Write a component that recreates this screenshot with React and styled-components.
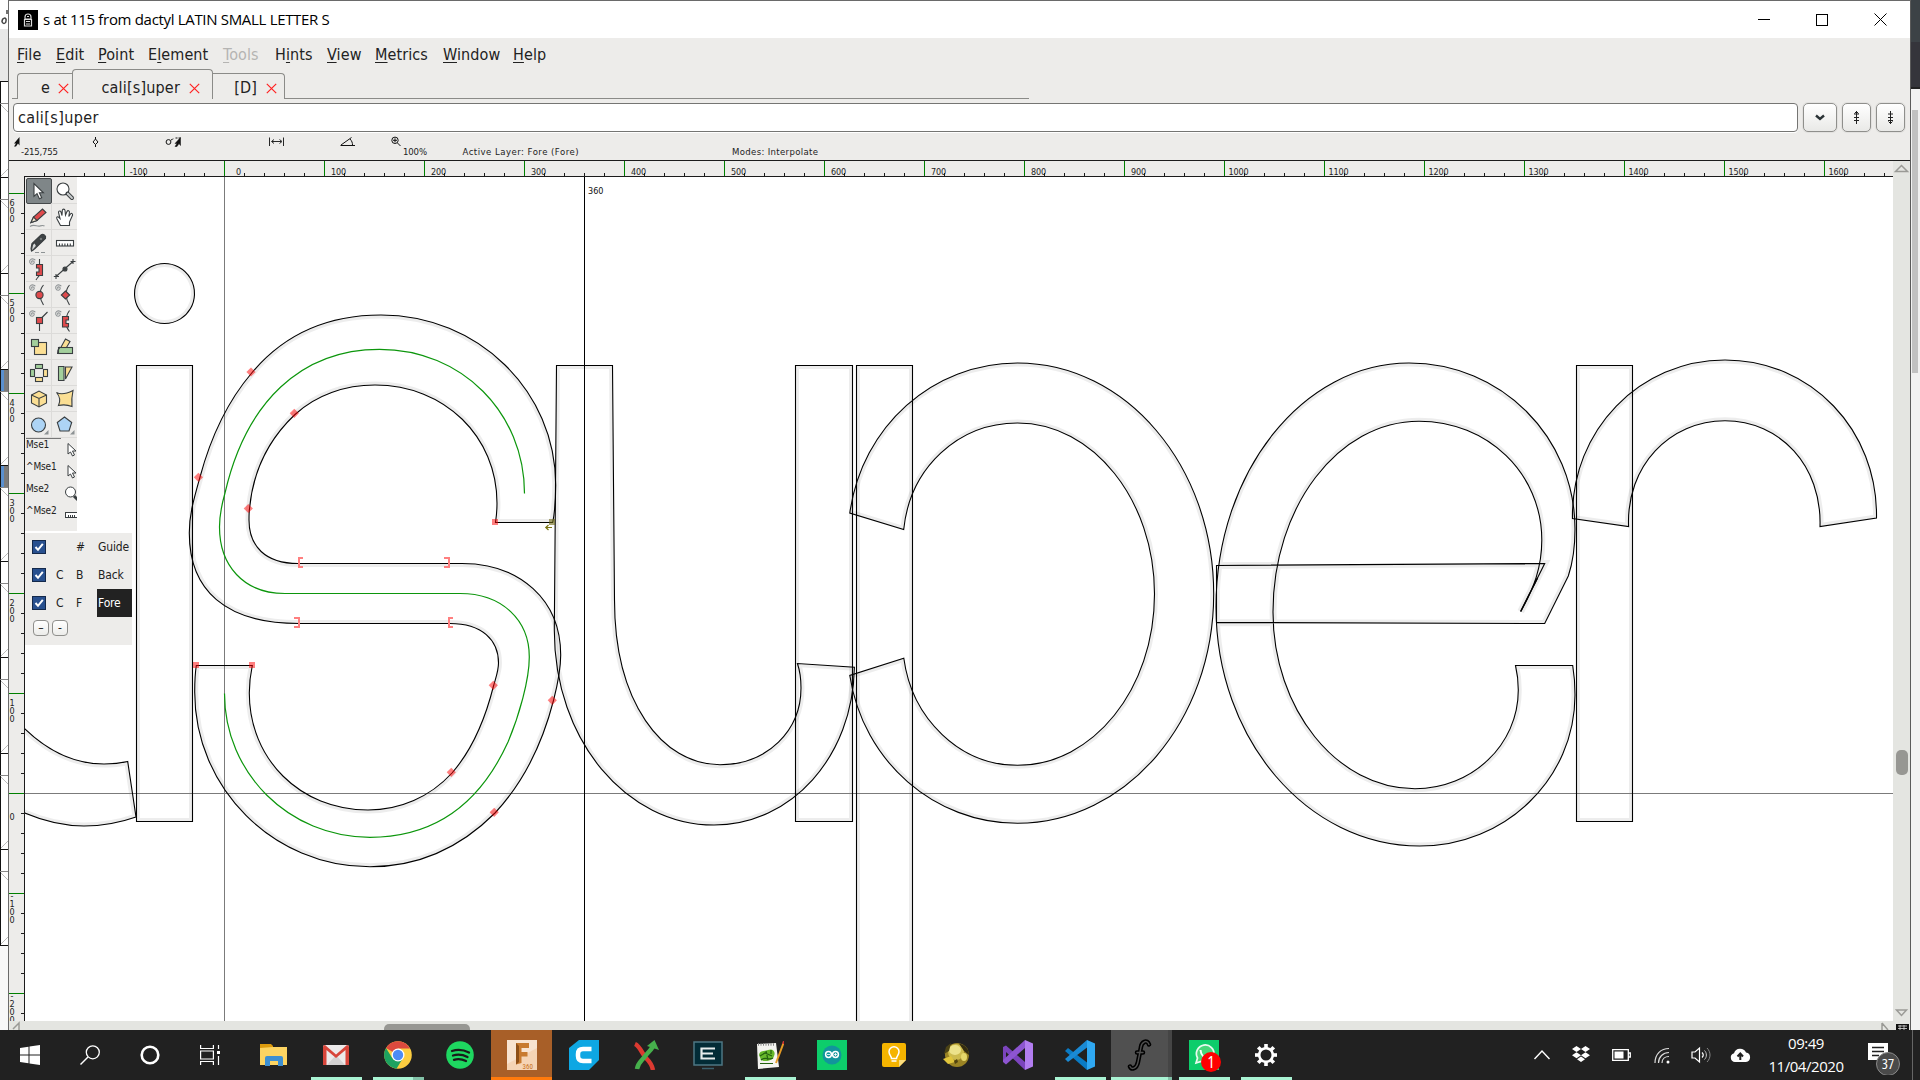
import React from "react";
import styled, { createGlobalStyle } from "styled-components";

const UI = '"DejaVu Sans Condensed", "DejaVu Sans", sans-serif';
const SEGOE = '"Open Sans", "Noto Sans", sans-serif';

const Global = createGlobalStyle`
  body { margin: 0; background: #212121; overflow: hidden; }
  * { box-sizing: border-box; }
  svg { display: block; }
`;

const Desktop = styled.div`
  width: 1920px;
  height: 1080px;
  display: flex;
  flex-direction: column;
  overflow: hidden;
  font-family: ${UI};
  font-stretch: condensed;
  color: #222;
`;
const Workspace = styled.div`
  display: flex;
  height: 1030px;
  background: #f8f8f8;
`;
const Win = styled.main`
  width: 1903px;
  height: 1030px;
  display: flex;
  flex-direction: column;
  border-top: 1px solid #6a6a6a;
  border-left: 1px solid #6a6a6a;
  border-right: 1px solid #5a5a5a;
  background: #edecea;
`;
const TitleBar = styled.header`
  height: 37px;
  display: flex;
  align-items: center;
  background: #fff;
  padding-left: 9px;
`;
const TitleText = styled.h1`
  flex: 1;
  margin: 0 0 1px 5px;
  font: 400 15px ${SEGOE};
  letter-spacing: -0.32px;
  color: #000;
  white-space: pre;
`;
const WinButton = styled.div`
  width: 58.5px;
  display: flex;
  justify-content: center;
`;
const MenuBar = styled.nav`
  height: 31px;
  display: flex;
  align-items: center;
  padding: 2px 0 0 8px;
`;
const MenuItem = styled.span`
  width: ${(p) => p.$w}px;
  font-size: 16px;
  line-height: 18px;
  letter-spacing: 0.1px;
  white-space: pre;
  color: ${(p) => (p.$off ? "#b5b4b2" : "#222")};
  u { text-underline-offset: 2px; text-decoration-thickness: 1px; }
`;
const Tabs = styled.div`
  height: 31px;
  display: flex;
  align-items: flex-end;
  padding-bottom: 1px;
  padding-left: 3px;
`;
const TabEdge = styled.div`
  width: ${(p) => p.$w}px;
  height: 1px;
  background: #8b8b88;
`;
const Tab = styled.div`
  width: ${(p) => p.$w}px;
  height: ${(p) => (p.$active ? 30 : 26)}px;
  display: flex;
  align-items: flex-end;
  justify-content: flex-end;
  gap: ${(p) => p.$gap}px;
  padding: 0 ${(p) => p.$pad}px 2px 0;
  border: 1px solid #8b8b88;
  border-bottom: none;
  border-left-width: ${(p) => (p.$joined ? 0 : 1)}px;
  border-right-width: ${(p) => (p.$open ? 0 : 1)}px;
  border-radius: ${(p) => (p.$joined ? 0 : 4)}px ${(p) => (p.$open ? 0 : 4)}px 0 0;
  font-size: 16px;
  line-height: 18px;
  letter-spacing: 0.18px;
  svg { margin-bottom: 3px; }
`;
const EntryRow = styled.div`
  height: 33px;
  display: flex;
  align-items: flex-start;
  padding: 3px 0 0 4px;
`;
const Entry = styled.div`
  width: 1788px;
  height: 29px;
  margin-right: 5px;
  padding-left: 4px;
  border: 1px solid #757573;
  border-radius: 4px;
  background: #fff;
  font-size: 16px;
  line-height: 27px;
  letter-spacing: 0.38px;
  box-shadow: 0 1px 0 #fff;
`;
const PushButton = styled.div`
  width: ${(p) => p.$w}px;
  height: 29px;
  margin-right: 5px;
  display: flex;
  align-items: center;
  justify-content: center;
  border: 1px solid #8f8f8c;
  border-radius: 5px;
  background: linear-gradient(#fff, #e9e9e7);
  box-shadow: 0 0 0 1px #e2e1df;
`;
const InfoBar = styled.div`
  height: 28px;
  border-bottom: 1px solid #1c1c1c;
`;
const RulerRow = styled.div`
  display: flex;
  height: 16px;
`;
const Body = styled.div`
  display: flex;
  height: 844px;
`;
const Canvas = styled.section`
  position: relative;
  width: 1868px;
  height: 844px;
  background: #fff;
  overflow: hidden;
`;
const VScroll = styled.div`
  width: 17px;
  height: ${(p) => p.$h}px;
  background: #e4e5e1;
`;
const HScroll = styled.div`
  height: 9px;
  background: #e4e5e1;
  overflow: hidden;
`;
const Palette = styled.aside`
  position: absolute;
  left: 0;
  top: 0;
  width: 52px;
  height: 354px;
  padding: 1px 0 0 1px;
  background: #edecea;
  overflow: hidden;
`;
const ToolGrid = styled.div`
  display: grid;
  grid-template-columns: 26px 26px;
  grid-auto-rows: 26px;
`;
const Tool = styled.div`
  border-right: 1px solid #dcdbd9;
  border-bottom: 1px solid #dcdbd9;
  ${(p) => p.$on && "background: #7f8688; border: 1px solid #45494b; border-radius: 2px; svg { margin: -1px; }"}
`;
const MouseList = styled.div`
  border-top: 1px solid #777;
  width: 35px;
`;
const MouseRow = styled.div`
  display: flex;
  width: 52px;
  height: 22px;
  font-size: 10px;
  line-height: 12px;
  letter-spacing: -0.15px;
  span { width: 36px; white-space: pre; padding-left: 0; }
`;
const Layers = styled.aside`
  position: absolute;
  left: 0;
  top: 356px;
  width: 107px;
  height: 112px;
  background: #edecea;
`;
const LayerRow = styled.div`
  display: grid;
  grid-template-columns: 31px 20px 21px 35px;
  height: 28px;
  align-items: center;
  font-size: 12px;
  letter-spacing: -0.15px;
`;
const Check = styled.div`
  width: 14px;
  height: 14px;
  margin-left: 7px;
  background: #28508f;
  border: 1px solid #14294b;
`;
const LayerName = styled.div`
  height: 28px;
  line-height: 29px;
  padding-left: 1px;
  background: ${(p) => (p.$on ? "#222" : "transparent")};
  color: ${(p) => (p.$on ? "#fff" : "#222")};
`;
const LayerButtons = styled.div`
  display: flex;
  gap: 3px;
  padding: 3px 0 0 8px;
`;
const MiniButton = styled.div`
  width: 16px;
  height: 16px;
  border: 1px solid #8f8f8c;
  border-radius: 4px;
  background: linear-gradient(#fff, #ececea);
  font-size: 12px;
  line-height: 14px;
  text-align: center;
`;
const Taskbar = styled.footer`
  height: 50px;
  display: flex;
  background: #212121;
`;
const Slot = styled.div`
  width: ${(p) => p.$w || 62}px;
  margin-left: ${(p) => p.$ml || 0}px;
  height: 50px;
  display: flex;
  align-items: center;
  justify-content: center;
  position: relative;
  background: ${(p) => p.$bg || "transparent"};
`;
const Running = styled.i`
  position: absolute;
  bottom: 0;
  left: ${(p) => (p.$full ? 0 : 6)}px;
  right: ${(p) => (p.$full ? 0 : 5)}px;
  height: 3px;
  background: ${(p) => p.$c || "#a9f3d3"};
`;
const StackEdge = styled.i`
  position: absolute;
  right: ${(p) => p.$r}px;
  bottom: 0;
  width: ${(p) => p.$w}px;
  height: ${(p) => p.$h}px;
  background: ${(p) => p.$c};
`;
const Tray = styled.div`
  margin-left: auto;
  display: flex;
  align-items: center;
  width: 394px;
`;
const TrayIcon = styled.div`
  margin-left: ${(p) => p.$ml}px;
`;
const Clock = styled.div`
  width: 96px;
  margin-left: 7px;
  text-align: center;
  color: #fff;
  font: 400 15px/23px ${SEGOE};
  letter-spacing: -0.45px;
`;

const Ic = ({ w, h, vb, children, ...r }) => (
  <svg width={w} height={h} viewBox={vb || `0 0 ${w} ${h}`} fill="none" {...r}>
    {children}
  </svg>
);

/* ---------- glyph outlines, in window pixels ---------- */
const GLYPHS = [
  "M20 724C48 753 77 764 104 764C112 764 120 763.3 127.7 761.5L136 817C119 823 102 826 84 826C62 826 42 821 20 811Z",
  "M136.5 365.5H192.5V821.5H136.5Z",
  "M164.5 263.500a30 30 0 1 0 .01 0Z",
  "M552.7 522.5H495.5C496.5 516 497 510 497 503C497 437 445 385 375 385C345 385 316 395 295 414.5C268 440 253 472 249.6 508C249 512 249 516 249 520C249 546 265 563.5 298 563.5H462C520 563.5 560.7 600 560.7 655C560.7 670 558 683 553.5 700.5C542 745 523 783 495 813C460 848 418 866.7 370 866.7C273 866.7 194.7 788 194.7 692C194.7 682 195 674 196.3 665.5H252.3C250.5 674 249.3 684 249.3 693C249.3 759 300 810 368 810C400 810 430 797 452 773C472 750 485 720 493.5 686C496 677 498.5 671 498.5 663C498.5 640 482 623.5 450 623.5H299C225 623.5 189.3 590 189.3 533C189.3 515 193 502 200 477C210 440 227 402 251.7 373C285 333 330 315 381 315C478 315 555.7 391 555.7 485C555.7 497 555 511 552.7 522.5Z",
  "M556.5 365.5H612.5L614.5 600C614.5 702 662 764.7 720 764.7C768 764.7 801 730 801 688C801 679 800 671 797.4 663.5L854.4 667.3C853 757 791 825 714 825C627 825 554.3 741 554.3 630Z",
  "M795.5 365.5H852.5V821.5H795.5Z",
  "M856.5 365.5H912.5V1100H856.5Z",
  "M849.8 513C862 426 933 363 1017.5 363C1126 363 1213.7 466 1213.7 594C1213.7 721 1126 823.3 1017.5 823.3C935 823.3 863 762 849.8 675.5L903.8 658.3C912 719 960 765.3 1017.5 765.3C1093 765.3 1154.5 689 1154.5 594C1154.5 500 1093 423 1017.5 423C958 423 910 468 903.7 529.5Z",
  "M1572.7 665.5H1515.5C1517.5 674 1518.3 682 1518.3 690C1518.3 745 1472 788.7 1415 788.7C1337 788.7 1273 709 1273 612C1273 507 1338 421.2 1419 421.2C1487 421.2 1541.8 473 1541.8 540C1541.8 567 1534 588 1520.7 611.5L1544.7 563.5L1216.5 565.5V622.5L1544.7 623.5L1568.3 576C1573 562 1575 546 1575 529C1575 437 1501 363 1409 363C1303 363 1216 472 1216 607C1216 739 1307 846 1419.7 846C1505 846 1575 779 1575 695C1575 684 1574.3 675 1572.7 665.5Z",
  "M1576.5 365.5H1632.5V821.5H1576.5Z",
  "M1572.5 518.5C1571 430 1640 360 1725 360C1811 360 1878 430 1876.5 518L1820 526.5C1822 466 1780 420.7 1725 420.7C1670 420.7 1626 466 1628.6 526.5Z",
];
const SPINE =
  "M524.5 493.5C524.5 413 462 349.3 379.500 349.3C301 349.3 246 402 225 493C221 507 219.5 515 219.5 527C219.5 565 243 593.5 285 593.5H460C502 593.5 529.3 620 529.3 657C529.3 680 519 716 508 742C478 808 430 837.3 370 837.3C289 837.3 224.5 773 224.5 693.5";

const DIAMONDS = [[251, 372], [294.3, 413.3], [198.4, 477.3], [248.3, 508.5], [493.3, 685.3], [552.3, 700.3], [451.3, 772.3], [494.2, 812.3]];
const SQUARES = [[495, 522], [196, 665], [252, 665]];

const GlyphView = () => (
  <svg width="1868" height="844" viewBox="25 177 1868 844" fill="none">
    <defs>
      {GLYPHS.map((d, i) => (
        <clipPath id={`g${i}`} key={i}><path d={d} /></clipPath>
      ))}
    </defs>
    {GLYPHS.map((d, i) => (
      <path key={i} d={d} stroke="#000" strokeOpacity="0.07" strokeWidth="7" clipPath={`url(#g${i})`} />
    ))}
    <path d="M25 793.5H1893M224.5 177V1021" stroke="#7b7b7b" />
    <path d="M584.5 177V1021" stroke="#000" />
    <path d={SPINE} stroke="#0c960c" strokeWidth="1.2" />
    {GLYPHS.map((d, i) => (
      <path key={i} d={d} stroke="#000" strokeWidth="1.1" />
    ))}
    <path d="M1537.5 578L1520.7 611.500" stroke="#000" strokeWidth="1.500" />
    {DIAMONDS.map(([x, y]) => (
      <path key={x} d={`M${x - 4.6} ${y}l4.6 -4.6l4.6 4.6l-4.6 4.6z`} fill="#ff0000" fillOpacity="0.5" />
    ))}
    {SQUARES.map(([x, y]) => (
      <rect key={x} x={x - 3} y={y - 3} width="6" height="6" fill="#ff0000" fillOpacity="0.5" />
    ))}
    <rect x="549" y="519" width="6" height="6" fill="#6b6611" fillOpacity="0.6" />
    <path d="M303 558H299V567H303M444 558H449V567H444M294 618H299V627H294M453 618H449V627H453" stroke="#ff7f7f" strokeWidth="2" />
    <path d="M552 527.5H546M548.5 525L545.8 527.5L548.5 530" stroke="#7a7411" strokeWidth="1.200" />
    <text x="588" y="194" fontSize="9" fill="#111">360</text>
  </svg>
);

const range = (a, b, s) => {
  const out = [];
  for (let v = a; v <= b; v += s) out.push(v);
  return out;
};

const TopRuler = () => (
  <svg width="1884" height="16" viewBox="9 161 1884 16">
    <path d="M24 176.5H1893" stroke="#1c1c1c" />
    {range(-180, 1660, 20).map((v) =>
      v % 100 === 0 ? (
        <g key={v}>
          <path d={`M${224.5 + v} 161V176`} stroke="#008000" />
          <text x={238.6 + v} y="174.5" fontSize="9" letterSpacing="-0.15" textAnchor="middle" fill="#222">{v}</text>
        </g>
      ) : (
        <path key={v} d={`M${224.5 + v} 173V176`} stroke="#1c1c1c" />
      )
    )}
  </svg>
);

const SideRuler = () => (
  <svg width="16" height="844" viewBox="9 177 16 844">
    <path d="M24.5 177V1021" stroke="#1c1c1c" />
    {range(-220, 600, 20).map((v) => {
      const y = 793.5 - v;
      if (v % 100 !== 0) return <path key={v} d={`M21 ${y}H24`} stroke="#1c1c1c" />;
      const chars = String(v).split("");
      return (
        <g key={v}>
          <path d={`M9 ${y}H24`} stroke="#008000" />
          {chars.map((c, i) => {
            const top = v < 0 ? 5.500 : v === 0 ? 26.500 : 12.500;
            return <text key={i} x="12" y={y + top + i * 7.9} fontSize="9" textAnchor="middle" fill="#222">{c}</text>;
          })}
        </g>
      );
    })}
  </svg>
);

const InfoStrip = () => (
  <svg width="1901" height="27" viewBox="9 133 1901 27" fill="none" stroke="#111" fontSize="9.5">
    <path d="M19.5 137L14 143.500L16 143.500L14 146.500L16 146.500L18 143.500L19.500 145.500Z" fill="#111" stroke="none" />
    <path d="M95.5 137V139M95.5 144.5V147M95.5 139L98 142L95.5 144.5L93 142Z" />
    <circle cx="168.5" cy="142" r="2.4" />
    <path d="M171 140L174 138.5M175.5 138H181" strokeDasharray="2 1" />
    <path d="M180.5 137.500L175 143.500L177 143.500L175 146.500L177 146.500L179 143.500L180.500 145.500Z" fill="#111" stroke="#111" strokeWidth=".5" />
    <path d="M269.5 137.5V146M283.5 137.5V146M272 141.5H281M274 139.5L271.5 141.5L274 143.5M279.5 139.5L282 141.5L279.5 143.5" strokeWidth="0.9" />
    <path d="M340.5 145.5H355M341 145L351.5 137.5M350 139C352 141 352.5 143 352.5 145" />
    <circle cx="395" cy="140.3" r="3.2" />
    <path d="M393 140.3H397M395 138.3V142.3M397.5 143L400.5 146" />
    <g fill="#222" stroke="none">
      <text x="21" y="155" textLength="37">-215,755</text>
      <text x="403" y="155" textLength="24">100%</text>
      <text x="462.5" y="155" textLength="116">Active Layer: Fore (Fore)</text>
      <text x="732" y="155" textLength="86">Modes: Interpolate</text>
    </g>
  </svg>
);

const RedX = () => (
  <Ic w={11} h={11}><path d="M.8.8L10.2 10.2M10.2.8L.8 10.2" stroke="#f22" strokeWidth="1.2" /></Ic>
);

const T = ({ children, on }) => (
  <Tool $on={on}>
    <Ic w={26} h={26} stroke="#3a3f41" strokeWidth="1.1">{children}</Ic>
  </Tool>
);
const Spiro = () => (
  <path d="M6.3 6.6C5.2 6.4 5.3 4.8 6.8 4.8C8.8 5 8.7 8 6.3 8.3C3.6 8.3 2.8 4.6 4.8 3.4C6.2 2.5 8.4 2.8 9.3 4.3" stroke="#8d9294" strokeWidth="1.1" />
);
const PTR = "M8 5.5V18.3L11 15.6L13.4 20.8L15.7 19.8L13.4 14.8H17.4Z";

const Tools = () => (
  <ToolGrid>
    <T on><path d={PTR} fill="#fff" /></T>
    <T><circle cx="11" cy="11" r="6" fill="#fff" /><path d="M15.5 15.500L20 20" stroke="#3a3f41" strokeWidth="4" strokeLinecap="round" /><path d="M15.8 15.8L20 20" stroke="#c9cccd" strokeWidth="2" strokeLinecap="round" /></T>
    <T><path d="M5 18.500L7.5 13L16.500 5L20 8.500L11 16.500Z" fill="#df4a4c" /><path d="M5 18.500L7.500 13L11 16.500Z" fill="#f3e6d0" /><path d="M4 22.5C8 19.5 11 23 14 22C16 21.4 17 21 18.500 22" stroke="#8d9294" /></T>
    <T><path d="M8.5 21.500L5 15C4 13 5.500 12 7 13.500L8 14.500L6.500 8.500C6.500 6.500 8.500 6.500 9 8L10 11.500L10.300 6.500C10.500 4.700 12.800 4.700 13 6.500L13.500 11L15 7.500C15.800 6 17.800 6.700 17.400 8.500L16.800 12.500L18.500 10C19.500 8.800 21 9.800 20.500 11.300L17.500 18V21.500Z" fill="#fff" /></T>
    <T><path d="M5 18.500L6 13.500L15 5C17 3.500 20.500 5.500 19.500 8.500L9 18.500L5.500 21Z" fill="#3f4446" /><path d="M5.500 20L6.500 14.500L9 12.500L10.500 16L6.500 20.500Z" fill="#d5d8d8" /><circle cx="15" cy="9" r="1.300" fill="#cfd2d2" /><path d="M9 22.500H20" strokeDasharray="4 2" stroke="#8d9294" /></T>
    <T><rect x="4.500" y="10.500" width="17" height="5.500" fill="#fff" /><path d="M7.500 16V13.500M10.200 16V13.500M12.900 16V13.500M15.600 16V13.500M18.300 16V13.500" /></T>
    <T><Spiro /><path d="M13.500 3V8M13.500 19C12.500 21 11 22 10 24" /><path d="M10.500 8.500H16.500V19.500H10.500V16H13V12H10.500Z" fill="#df4a4c" /></T>
    <T><path d="M4 21L21 6M4 18.500V23.500M1.800 21H7M18.500 6H23.500M21 3.500V8.500" transform="translate(0 -.5)" /><circle cx="13" cy="13" r="2" fill="#3a3f41" /></T>
    <T><Spiro /><path d="M17.500 3C13 8 13 16 17.500 23" /><circle cx="13.500" cy="13" r="3.600" fill="#df4a4c" /></T>
    <T><Spiro /><path d="M17.500 3C13 8 13 16 17.500 23" /><path d="M13.500 9L17.700 13L13.500 17L9.300 13Z" fill="#df4a4c" /></T>
    <T><Spiro /><path d="M13.500 12L21.500 4M13.500 15V23" /><rect x="10.500" y="9.500" width="6" height="6" fill="#df4a4c" /></T>
    <T><Spiro /><path d="M17.500 2.500C15.500 5 15 7 14.500 9M14.500 18C15 20 15.500 21 17.500 23.500" /><path d="M10.500 8.500H16.500V12H14V15.500H16.500V19H10.500Z" fill="#df4a4c" /></T>
    <T><rect x="8.500" y="8.500" width="12" height="12" fill="#fbdf94" /><rect x="5.500" y="5.500" width="7" height="7" fill="#a3cf9c" /></T>
    <T><path d="M8 15L13.500 5L18 7.500L13 16Z" fill="#fbdf94" /><rect x="6.500" y="13.500" width="14" height="6" fill="#a3cf9c" /><path d="M8 13C6 15 5.500 17.500 5.500 20" /></T>
    <T><rect x="9.500" y="4.500" width="7" height="4" fill="#a3cf9c" /><rect x="4.500" y="9.500" width="4" height="7" fill="#a3cf9c" /><rect x="17.500" y="9.500" width="4" height="7" fill="#fbdf94" /><rect x="9.500" y="17.500" width="7" height="4" fill="#fbdf94" /></T>
    <T><path d="M6.500 6.500H12V20.500H6.500Z" fill="#a3cf9c" /><path d="M13.500 19V7H20Z" fill="#fbdf94" /></T>
    <T><path d="M5.500 9L13 5L20.500 9V17L13 21L5.500 17Z" fill="#fbdf94" /><path d="M5.500 9L13 12.500L20.500 9M13 12.500V21" /></T>
    <T><path d="M4.500 6.500C9 9 15 7.500 21 4.500C20 9 19.500 15 20 20.500C15 18.500 11 18.500 6.500 19.500C8.500 15 8 10.500 4.500 6.500Z" fill="#fbdf94" /></T>
    <T><circle cx="12.500" cy="13" r="7" fill="#add4f5" /><path d="M22.500 18V22.500H18Z" fill="#8d9294" stroke="none" /></T>
    <T><path d="M12.500 5L19.700 10.500L17 19H8L5.300 10.500Z" fill="#add4f5" /><path d="M22.500 18V22.500H18Z" fill="#8d9294" stroke="none" /></T>
  </ToolGrid>
);

const MicroPointer = () => (
  <Ic w={16} h={20}><path d="M6 4.500V15L8.500 13L10.500 17L12.500 16L10.500 12H14Z" fill="#fff" stroke="#3a3f41" /></Ic>
);

const LeftBackdrop = () => (
  <svg width="8" height="1030" viewBox="0 0 8 1030" fill="none">
    <path d="M0 0H8V29H0Z" fill="#fff" />
    <path d="M0 29H8V81H0Z" fill="#e8e8e8" />
    <path d="M0 81H8V945H0Z" fill="#fff" />
    <path d="M2 22C2 17 7 17 6 21C6 24 3 24 2 22M7 10V14" stroke="#444" strokeWidth="1.500" />
    <path d="M.5 81V945" stroke="#111" />
    {range(81, 945, 96).map((y) => (
      <g key={y}>
        <path d={`M0 ${y + 0.5}H8`} stroke="#111" />
        {y < 900 && <path d={`M0 ${y + 22.500}H8`} stroke="#888" />}
        {y < 900 && <path d={`M1 ${y + 24}L8 ${y + 31}M1 ${y + 95}L8 ${y + 88}`} stroke="#bbb" />}
      </g>
    ))}
    <path d="M1 370H4V391H1ZM1 466H4V487H1Z" fill="#5a90cf" />
    <path d="M4 370H8V391H4ZM4 466H8V487H4Z" fill="#7b7b7b" />
  </svg>
);

const RightBackdrop = () => (
  <svg width="9" height="1030" viewBox="0 0 9 1030">
    <path d="M0 0H9V42H0Z" fill="#3c4246" />
    <path d="M0 42H9V87H0Z" fill="#35353b" />
    <path d="M0 87H9V89H0Z" fill="#222" />
    <path d="M0 89H9V1030H0Z" fill="#f1f1f1" />
    <path d="M1 110H7V373H1Z" fill="#c1c1c1" />
  </svg>
);

const GEAR = Array.from({ length: 8 }, (_, i) => i * 45);

export default function App() {
  return (
    <Desktop>
      <Global />
      <Workspace>
        <LeftBackdrop />
        <Win>
          <TitleBar>
            <Ic w={20} h={20}>
              <rect width="20" height="20" fill="#000" />
              <path d="M7 7C7 3 13 3 13 7V9H7ZM6.500 9.500H13.500V16H6.500Z" stroke="#ddd" strokeWidth="1.200" />
              <path d="M8 11.500H12M8 14H12M9 6.500H11" stroke="#ddd" />
            </Ic>
            <TitleText>s at 115 from dactyl LATIN SMALL LETTER S</TitleText>
            <WinButton><Ic w={12} h={12}><path d="M0 5.500H12" stroke="#000" /></Ic></WinButton>
            <WinButton><Ic w={12} h={12}><rect x=".5" y=".5" width="11" height="11" stroke="#000" /></Ic></WinButton>
            <WinButton><Ic w={13} h={13}><path d="M.5.5L12.500 12.500M12.500.5L.5 12.500" stroke="#000" /></Ic></WinButton>
          </TitleBar>
          <MenuBar>
            <MenuItem $w={39}><u>F</u>ile</MenuItem>
            <MenuItem $w={42}><u>E</u>dit</MenuItem>
            <MenuItem $w={50}><u>P</u>oint</MenuItem>
            <MenuItem $w={75}>E<u>l</u>ement</MenuItem>
            <MenuItem $w={52} $off><u>T</u>ools</MenuItem>
            <MenuItem $w={52}>H<u>i</u>nts</MenuItem>
            <MenuItem $w={48}><u>V</u>iew</MenuItem>
            <MenuItem $w={68}><u>M</u>etrics</MenuItem>
            <MenuItem $w={70}><u>W</u>indow</MenuItem>
            <MenuItem $w={50}><u>H</u>elp</MenuItem>
          </MenuBar>
          <Tabs>
            <TabEdge $w={5} />
            <Tab $w={55} $gap={8} $pad={3} $open>e<RedX /></Tab>
            <Tab $w={141} $gap={9} $pad={12} $active>cali[s]uper<RedX /></Tab>
            <Tab $w={72} $gap={9} $pad={7} $joined>[D]<RedX /></Tab>
            <TabEdge $w={744} />
          </Tabs>
          <EntryRow>
            <Entry>cali[s]uper</Entry>
            <PushButton $w={34}><Ic w={10} h={7}><path d="M1 1.500L5 5L9 1.500" stroke="#2b3336" strokeWidth="2.400" /></Ic></PushButton>
            <PushButton $w={29}><Ic w={7} h={13}><path d="M3.500 0V13M1 3H6M1 6.500H6M1 9.500H6M1.500 2.500L3.500.5L5.500 2.500" stroke="#222" /></Ic></PushButton>
            <PushButton $w={29}><Ic w={7} h={13}><path d="M3.500 0V13M1 3H6M1 6.500H6M1 9.500H6M1.500 10.500L3.500 12.500L5.500 10.500" stroke="#222" /></Ic></PushButton>
          </EntryRow>
          <InfoBar><InfoStrip /></InfoBar>
          <RulerRow>
            <TopRuler />
            <VScroll $h={16}>
              <Ic w={17} h={16}><path d="M2.500 10.500L8.500 4.500L14.500 10.500Z" fill="#e4e5e1" stroke="#9a9a96" strokeWidth="1.500" /></Ic>
            </VScroll>
          </RulerRow>
          <Body>
            <SideRuler />
            <Canvas>
              <GlyphView />
              <Palette>
                <Tools />
                <MouseList>
                  <MouseRow><span>Mse1</span><MicroPointer /></MouseRow>
                  <MouseRow><span>^Mse1</span><MicroPointer /></MouseRow>
                  <MouseRow><span>Mse2</span><Ic w={16} h={20}><circle cx="8.500" cy="9" r="5" fill="#fff" stroke="#3a3f41" /><path d="M12 13L16 17" stroke="#3a3f41" strokeWidth="3" /></Ic></MouseRow>
                  <MouseRow><span>^Mse2</span><Ic w={16} h={20}><rect x="3.500" y="7.500" width="17" height="5" fill="#fff" stroke="#3a3f41" /><path d="M6.500 12V10M8.500 12V10M10.500 12V10M12.500 12V10" stroke="#3a3f41" /></Ic></MouseRow>
                </MouseList>
              </Palette>
              <Layers>
                {[["", "#", "Guide"], ["C", "B", "Back"], ["C", "F", "Fore"]].map(([c, k, n]) => (
                  <LayerRow key={n}>
                    <Check><Ic w={12} h={12}><path d="M2.500 6L5 8.800L9.800 2.800" stroke="#fff" strokeWidth="2" /></Ic></Check>
                    <span>{c}</span>
                    <span>{k}</span>
                    <LayerName $on={n === "Fore"}>{n}</LayerName>
                  </LayerRow>
                ))}
                <LayerButtons><MiniButton>–</MiniButton><MiniButton>-</MiniButton></LayerButtons>
              </Layers>
            </Canvas>
            <VScroll $h={844}>
              <Ic w={17} h={844}>
                <rect x="3" y="573" width="12" height="25" rx="5" fill="#979793" />
                <path d="M3.500 833L8.500 838.500L13.500 833Z" stroke="#9a9a96" strokeWidth="1.500" />
              </Ic>
            </VScroll>
          </Body>
          <HScroll>
            <Ic w={1901} h={9}>
              <rect x="375" y="3" width="86" height="14" rx="5" fill="#979793" />
              <path d="M4 8L10 2V12M1873 2L1879 9M1873 2V10" stroke="#9a9a96" strokeWidth="1.500" />
              <rect x="1887" y="3" width="13" height="6" fill="#111" />
              <path d="M1889 5H1898M1889 7.500H1898M1891 4V9M1895 4V9" stroke="#ddd" strokeWidth=".8" />
            </Ic>
          </HScroll>
        </Win>
        <RightBackdrop />
      </Workspace>

      <Taskbar>
        <Slot $w={60}><Ic w={20} h={20}><path d="M0 3L8.500 1.700V9.500H0ZM9.500 1.500L20 0V9.500H9.500ZM0 10.500H8.500V18.300L0 17ZM9.500 10.500H20V20L9.500 18.500Z" fill="#fff" /></Ic></Slot>
        <Slot $w={60}><Ic w={20} h={20}><circle cx="12.800" cy="7.300" r="6.500" stroke="#fff" strokeWidth="1.300" /><path d="M8 12L.5 19.500" stroke="#fff" strokeWidth="1.400" /></Ic></Slot>
        <Slot $w={60}><Ic w={20} h={20}><circle cx="10" cy="10" r="8.300" stroke="#fff" strokeWidth="2.600" /></Ic></Slot>
        <Slot $w={60}><Ic w={20} h={20}><path d="M.6 0V3.500H13.400V0M.6 20V16.500H13.400V20M.6 6H13.400V14H.6ZM18.500 0V4M18.500 11V20" stroke="#fff" strokeWidth="1.200" /><rect x="17" y="6" width="3" height="3" fill="#fff" /></Ic></Slot>
        <Slot $ml={3}><Ic w={28} h={24}><path d="M0 1H11L13 3V6H0Z" fill="#dc9a0d" /><path d="M0 5L13 4H27V22H0Z" fill="#fcd462" /><path d="M5 23V15Q5 13 7 13H21Q23 13 23 15V23H18V18H10V23Z" fill="#3d8fd1" /></Ic></Slot>
        <Slot><Ic w={26} h={20}><rect width="26" height="20" rx="2" fill="#eceaea" /><path d="M4 20L13 10L22 20Z" fill="#d4d2d2" /><path d="M0 20V2Q0 0 2 0L13 9.500L24 0Q26 0 26 2V20H22.500V5L13 13L3.500 5V20Z" fill="#d8453a" /></Ic><Running /></Slot>
        <Slot>
          <Ic w={28} h={28}><circle cx="14" cy="14" r="13.800" fill="#fccd40" /><path d="M14 14L2 7A13.800 13.800 0 0 1 26 7.500H14Z" fill="#dc4a3e" /><path d="M2 7A13.800 13.800 0 0 0 12.500 27.700L19 17L14 14L8.500 17.500Z" fill="#1da260" /><circle cx="14" cy="14" r="6.500" fill="#fff" /><circle cx="14" cy="14" r="5.200" fill="#4c8bf5" /></Ic>
          <Running /><StackEdge $r={5} $w={11} $h={3} $c="#82c2a8" />
        </Slot>
        <Slot><Ic w={28} h={28}><circle cx="14" cy="14" r="13.800" fill="#1ed760" /><path d="M6 10C12 8 18 9 23 11.500M7 14.500C12 13 17 13.700 21.500 16M8 18.800C12 17.500 16 18 20 20" stroke="#1a1a1a" strokeWidth="2.300" strokeLinecap="round" /></Ic></Slot>
        <Slot $w={61} $bg="#a85f28">
          <Ic w={30} h={30}><rect width="30" height="30" fill="#f8e3d0" /><path d="M0 24L30 8V30H0Z" fill="#f3c9a4" opacity=".6" /><path d="M9 3H22V8H14.500V12H20.500V16.500H14.500V23L9 24.500Z" fill="#c87a2f" /><path d="M9 3L12 6V22L9 24.500Z" fill="#8e4f17" /><text x="15.500" y="28.500" fontSize="7" fill="#c9701c" fontFamily="Roboto">360</text></Ic>
          <Running $full $c="#ff7a0c" />
        </Slot>
        <Slot $ml={1}><Ic w={30} h={30}><path d="M10 0H30V20L20 30H0V8Z" fill="#0ea7e3" /><path d="M22.500 9H14Q9 9 9 14V16Q9 21 14 21H22.500" stroke="#fff" strokeWidth="4.500" /></Ic></Slot>
        <Slot><Ic w={28} h={30}><path d="M3 4C8 6 10 14 14 18C17 21 20 24 21 30" stroke="#dc3a31" strokeWidth="4.500" /><path d="M5 29C6 22 10 21 14 15C18 11 19 10 22 5" stroke="#46b04c" strokeWidth="4.500" /><path d="M15 6L22.500 0L27 10Z" fill="#46b04c" /></Ic></Slot>
        <Slot><Ic w={30} h={30}><rect x="1" y="2" width="28" height="23" fill="#022b36" stroke="#4d7784" strokeWidth="1.500" /><path d="M22 8.500H8.500V18.500H22M8.500 13.500H20" stroke="#e6ecec" strokeWidth="2.200" /><path d="M9 28.500H21" stroke="#3b5f6c" strokeWidth="1.500" /></Ic></Slot>
        <Slot><Ic w={28} h={28}><path d="M1 3L20 2L23 26L2 28Z" fill="#f4f4f0" /><path d="M2 3.500H19" stroke="#888" strokeWidth="2.500" strokeDasharray="1 1.500" /><path d="M3 14C4 8 9 11 12 9C17 7 20 11 18 15C17 20 9 21 5 19Z" fill="#67b82c" /><path d="M4 15L9 12L16 15M5 19C9 15 13 20 17 17M10 10L12 19M15 9V13M4 22.500H17" stroke="#24610f" strokeWidth="1.200" /><path d="M27.500 2L20 22" stroke="#e69b24" strokeWidth="2" /><path d="M28 0L27 3" stroke="#c33" strokeWidth="2" /></Ic><Running /></Slot>
        <Slot><Ic w={30} h={30}><rect width="30" height="30" fill="#0dcd6b" /><circle cx="15" cy="15" r="9.500" fill="#12959c" /><circle cx="11.500" cy="14.500" r="2.900" stroke="#fff" strokeWidth="1.500" /><circle cx="18.500" cy="14.500" r="2.900" stroke="#fff" strokeWidth="1.500" /><path d="M10 14.500H13M17 14.500H20M18.500 13V16" stroke="#fff" strokeWidth=".8" /></Ic></Slot>
        <Slot><Ic w={24} h={24}><path d="M2 0H22Q24 0 24 2V17L17 24H2Q0 24 0 22V2Q0 0 2 0Z" fill="#f5b400" /><path d="M17 17H24L17 24Z" fill="#fbdc7e" /><path d="M9.500 15.500C9.500 13 7 12 7 8.800A5 5 0 0 1 17 8.800C17 12 14.500 13 14.500 15.500ZM9.500 18H14.500" stroke="#fff" strokeWidth="1.500" /></Ic></Slot>
        <Slot><Ic w={28} h={26}><ellipse cx="15" cy="13" rx="12" ry="12" fill="#9a8324" /><ellipse cx="14" cy="10" rx="8" ry="8" fill="#cdbb4e" /><ellipse cx="13" cy="8" rx="6" ry="5" fill="#ece28a" /><path d="M17 1.500C24 3 27 8 27 13L22 9Z" fill="#332c10" /><path d="M4 5L9 1L7 9L2 12Z" fill="#4b4215" /><path d="M1 17L9 14L13 20L6 22Z" fill="#e0c53c" /><ellipse cx="22" cy="15" rx="3" ry="4" fill="#e6d86a" /><path d="M12 19L15 17L16 20L13 22Z" fill="#51430f" /></Ic></Slot>
        <Slot><Ic w={30} h={30}><path d="M0 7L3 5.500L22 22V30L3 12V20L0 22Z" fill="#7b44bd" /><path d="M0 22L3 24.500L22 8V0L0 20Z" fill="#8d55d1" /><path d="M22 0L30 3.500V26.500L22 30Z" fill="#b27df0" /></Ic></Slot>
        <Slot><Ic w={30} h={30}><path d="M0 11L3 8L24 24L22 30Z" fill="#0a7bc4" /><path d="M0 19L3 22L24 6L22 0Z" fill="#1a8ad4" /><path d="M22 0L30 3.500V26.500L22 30Z" fill="#2fa8f2" /></Ic><Running /></Slot>
        <Slot $w={61} $bg="#505050">
          <Ic w={30} h={32}><path d="M22 5.500C20 0 14.500 3 14 8L11 23C9.500 30 4.500 31 3 27.500M10 13.500H16" stroke="#000" strokeWidth="4.500" strokeLinecap="round" /><path d="M22 5.500C20 0 14.500 3 14 8L11 23C9.500 30 4.500 31 3 27.500M10 13.500H16" stroke="#505050" strokeWidth="1.400" strokeLinecap="round" /></Ic>
          <Running $full /><StackEdge $r={0} $w={4} $h={50} $c="#454545" /><StackEdge $r={0} $w={4} $h={3} $c="#82c2a8" />
        </Slot>
        <Slot $ml={1}>
          <TrayIcon $ml={3}>
            <Ic w={34} h={34}>
              <rect y="2" width="30" height="30" fill="#0dcd6b" /><path d="M7 25L8.500 20A8.800 8.800 0 1 1 12 23.500Z" fill="#48d67a" stroke="#eafaf0" strokeWidth="1.700" />
              <path d="M11.500 12C12 18 16 20 19 20" stroke="#fff" strokeWidth="2" />
              <circle cx="22" cy="24" r="10" fill="#f00" /><text x="22" y="29.500" fontSize="16" textAnchor="middle" fill="#fff" fontFamily="Open Sans">1</text>
            </Ic>
          </TrayIcon>
          <Running />
        </Slot>
        <Slot><Ic w={24} h={24}><circle cx="12" cy="12" r="6.800" stroke="#fff" strokeWidth="2.600" />{GEAR.map((a) => <rect key={a} x="10.200" y="1" width="3.600" height="4" fill="#fff" transform={`rotate(${a} 12 12)`} />)}</Ic><Running /></Slot>

        <Tray>
          <Ic w={24} h={24}><path d="M8.500 16L16 8L23.500 16" stroke="#fff" strokeWidth="1.400" /></Ic>
          <TrayIcon $ml={22}><Ic w={18} h={18}><path d="M4.500 0L9 3L4.500 6L0 3ZM13.500 0L18 3L13.500 6L9 3ZM4.500 6.200L9 9.200L4.500 12.200L0 9.200ZM13.500 6.200L18 9.200L13.500 12.200L9 9.200ZM9 10.500L13 13.200L9 16L5 13.200Z" fill="#fff" /></Ic></TrayIcon>
          <TrayIcon $ml={22}><Ic w={19} h={12}><path d="M.7.7H16.300V11.300H.7ZM16.500 4H18.300V8H16.500" stroke="#fff" strokeWidth="1.300" /><rect x="2.500" y="2.500" width="9" height="7" fill="#fff" /></Ic></TrayIcon>
          <TrayIcon $ml={23}><Ic w={17} h={17}><path d="M1 16C1 7 7 1.500 15 1.500M4.500 16C4.500 10 9 5.500 15 5.500M8 16C8 12 11 9.500 15 9.500" stroke="#ddd" strokeWidth="1.200" /><circle cx="14" cy="15" r="1.500" fill="#fff" /></Ic></TrayIcon>
          <TrayIcon $ml={20}><Ic w={21} h={18}><path d="M1 6H4L8.500 2V16L4 12H1Z" stroke="#fff" strokeWidth="1.200" /><path d="M11 6.500C12.500 8 12.500 10 11 11.500" stroke="#fff" strokeWidth="1.200" /><path d="M13.500 4.500C16 7 16 11 13.500 13.500" stroke="#ccc" /><path d="M16 2C20 6 20 12 16 16" stroke="#888" /></Ic></TrayIcon>
          <TrayIcon $ml={18}><Ic w={21} h={14}><path d="M5 14A4.500 4.500 0 0 1 4 5.200A6.500 6.500 0 0 1 16 4.500A4.800 4.800 0 0 1 16 14Z" fill="#fff" /><path d="M10.300 12V6M7.500 8.500L10.300 5.500L13 8.500" stroke="#212121" strokeWidth="2" /></Ic></TrayIcon>
          <Clock>09:49<br />11/04/2020</Clock>
          <TrayIcon $ml={14}>
            <Ic w={34} h={40}>
              <path d="M0 8H20V25H5L0 25Z" fill="#fff" /><path d="M4 12.500H16M4 16.500H16M4 20.500H11" stroke="#212121" strokeWidth="1.300" />
              <circle cx="20" cy="29" r="11.500" fill="#4a4a4a" stroke="#8a8a8a" /><text x="20" y="34" fontSize="14.500" textAnchor="middle" fill="#fff" fontFamily="Open Sans">37</text>
            </Ic>
          </TrayIcon>
          <TrayIcon $ml={10}><Ic w={1} h={50}><path d="M.5 0V50" stroke="#666" /></Ic></TrayIcon>
        </Tray>
      </Taskbar>
    </Desktop>
  );
}
